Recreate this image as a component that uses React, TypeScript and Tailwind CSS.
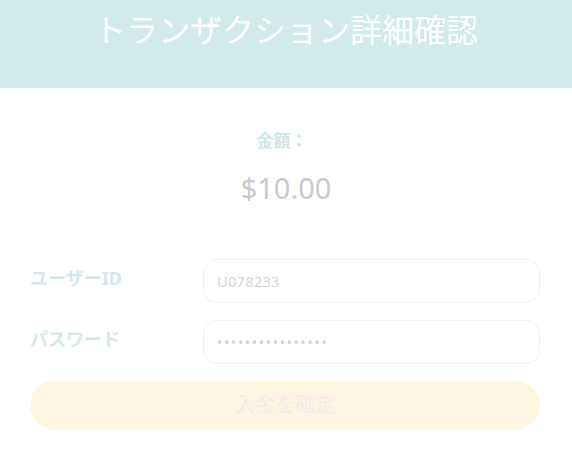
import React from 'react';

export default function App() {
  return (
    <div
      className="min-h-[451px] w-full bg-white"
      style={{ fontFamily: '"Noto Sans", "Noto Sans CJK JP", sans-serif' }}
    >
      {/* Header */}
      <div className="h-[88px] bg-[#d1ebeb] flex justify-center pt-[8px]">
        <h1 className="text-[32px] leading-[44px] text-white font-normal">
          トランザクション詳細確認
        </h1>
      </div>

      {/* Amount */}
      <div className="flex flex-col items-center pt-[41px]">
        <p className="text-[17px] leading-[24px] font-bold text-[#cfe6e9] -ml-[8px]">金額：</p>
        <p className="mt-[13px] text-[29px] leading-[44px] text-[#c9c9c9]">$10.00</p>
      </div>

      {/* Form */}
      <div className="px-[30px] pt-[49px] flex flex-col gap-[17px]">
        <div className="flex items-center">
          <label className="w-[173px] text-[18px] font-bold text-[#d4e8ea] -mt-[6px]">ユーザーID</label>
          <div className="flex-1 mr-[2px] h-[44px] rounded-[14px] border border-[#f2f2f2] bg-white px-[13px] flex items-center">
            <span className="text-[15px] text-[#d6d6d6]">U078233</span>
          </div>
        </div>
        <div className="flex items-center">
          <label className="w-[173px] text-[18px] font-bold text-[#d4e8ea] -mt-[6px]">パスワード</label>
          <div className="flex-1 mr-[2px] h-[44px] rounded-[14px] border border-[#f2f2f2] bg-white px-[13px] flex items-center">
            <span className="text-[14px] tracking-[1.7px] text-[#d0d0d0]">••••••••••••••••</span>
          </div>
        </div>
        <button className="mr-[2px] h-[48px] rounded-full bg-[#fff5e1] text-[20px] text-[#eeeeee] flex items-center justify-center">
          入金を確定
        </button>
      </div>
    </div>
  );
}
